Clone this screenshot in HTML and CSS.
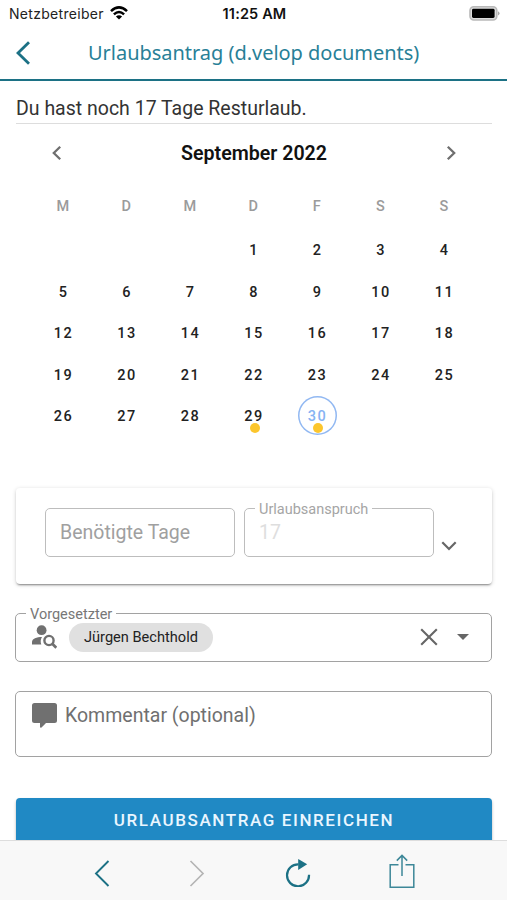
FILE: index.html
```html
<!DOCTYPE html>
<html lang="de">
<head>
<meta charset="utf-8">
<meta name="viewport" content="width=device-width, initial-scale=1">
<title>Urlaubsantrag</title>
<link rel="stylesheet" href="styles.css">
</head>
<body>
<div class="app">
  <div class="status">
    <div class="carrier"><span>Netzbetreiber</span>
      <svg width="18" height="14" viewBox="0 0 18 14" fill="none" stroke="#000" stroke-width="2.5"><path d="M1 5.1Q9-2.4 17 5.1"/><path d="M3.9 8.3Q9 3.6 14.1 8.3"/><path d="M9 13.6 5.9 10.5Q9 7.9 12.1 10.5Z" fill="#000" stroke="none"/></svg>
    </div>
    <div class="clock">11:25 AM</div>
    <svg class="battery" width="32" height="15" viewBox="0 0 32 15"><rect x="2" y=".8" width="26.8" height="13.2" rx="3.8" fill="#ddd" stroke="#b9b9b9" stroke-width="1.6"/><rect x="4" y="2.8" width="22.6" height="9.2" rx="1.4"/><path d="M30 5.2Q33.2 7.4 30 9.6Z" fill="#aaa"/></svg>
  </div>
  <header class="header">
    <svg class="back" width="16" height="24" viewBox="0 0 16 24"><path d="M14 1.2 3 12l11 10.8" fill="none" stroke="#1c7185" stroke-width="2.8"/></svg>
    <h1>Urlaubsantrag (d.velop documents)</h1>
  </header>
  <main class="content">
    <p class="message">Du hast noch 17 Tage Resturlaub.</p>
    <section class="calendar">
      <div class="month">
        <svg width="12" height="16" viewBox="0 0 12 16"><path d="M9.2 1.7 2.8 8l6.4 6.3" fill="none" stroke="#6f6f6f" stroke-width="2.3"/></svg>
        <h2>September 2022</h2>
        <svg width="12" height="16" viewBox="0 0 12 16"><path d="M2.8 1.7 9.2 8l-6.4 6.3" fill="none" stroke="#6f6f6f" stroke-width="2.3"/></svg>
      </div>
      <div class="weekdays"><span>M</span><span>D</span><span>M</span><span>D</span><span>F</span><span>S</span><span>S</span></div>
      <div class="days">
        <span class="first">1</span><span>2</span><span>3</span><span>4</span>
        <span>5</span><span>6</span><span>7</span><span>8</span><span>9</span><span>10</span><span>11</span>
        <span>12</span><span>13</span><span>14</span><span>15</span><span>16</span><span>17</span><span>18</span>
        <span>19</span><span>20</span><span>21</span><span>22</span><span>23</span><span>24</span><span>25</span>
        <span>26</span><span>27</span><span>28</span><span class="marked">29</span><span class="marked today">30</span>
      </div>
    </section>
    <section class="card">
      <div class="field needed">Benötigte Tage</div>
      <fieldset class="field claim"><legend>Urlaubsanspruch</legend><span>17</span></fieldset>
      <svg class="expand" width="16" height="10" viewBox="0 0 16 10"><path d="M1.3 1.3 8 8l6.7-6.7" fill="none" stroke="#666" stroke-width="2.2"/></svg>
    </section>
    <fieldset class="field manager">
      <legend>Vorgesetzter</legend>
      <div class="manager-row">
        <svg width="25" height="24" viewBox="0 0 25 24"><circle cx="9.6" cy="5.2" r="4.9" fill="#707070"/><path d="M0 19.5v-2.4C0 13.7 4.7 12 10 12q-2.200 3.400-.700 7.500Z" fill="#707070"/><circle cx="17" cy="15.500" r="4.600" fill="none" stroke="#707070" stroke-width="2.400"/><path d="m20 18.500 4.300 4.300" stroke="#707070" stroke-width="2.700"/></svg>
        <span class="chip">Jürgen Bechthold</span>
        <svg class="clear" width="18" height="18" viewBox="0 0 18 18"><path d="m1.200 1.200 15.600 15.600M16.800 1.200 1.200 16.800" stroke="#666" stroke-width="2.100"/></svg>
        <svg width="12" height="6" viewBox="0 0 12 6"><path d="M0 0h12L6 6Z" fill="#666"/></svg>
      </div>
    </fieldset>
    <div class="field comment">
      <svg width="25" height="25" viewBox="0 0 25 25"><path d="M2.500 0h20A2.500 2.500 0 0 1 25 2.500v15a2.500 2.500 0 0 1-2.500 2.500H14l-4.500 4.500q-1.500.500-1.500-.800V20H2.500A2.500 2.500 0 0 1 0 17.500v-15A2.500 2.500 0 0 1 2.500 0Z" fill="#707070"/></svg>
      <span>Kommentar (optional)</span>
    </div>
    <button class="submit">URLAUBSANTRAG EINREICHEN</button>
  </main>
  <nav class="toolbar">
    <svg width="16" height="27" viewBox="0 0 16 27"><path d="M14.500 1 2 13.500 14.500 26" fill="none" stroke="#1c7185" stroke-width="1.900"/></svg>
    <svg width="16" height="27" viewBox="0 0 16 27"><path d="M1.500 1 14 13.500 1.500 26" fill="none" stroke="#b5b5b5" stroke-width="1.700"/></svg>
    <svg width="26" height="28" viewBox="0 0 26 28"><path d="M13.500 5.300A11 11 0 1 0 24 15.700" fill="none" stroke="#1c7185" stroke-width="2.200"/><path d="M13.200 0v11l9-5.700Z" fill="#1c7185"/></svg>
    <svg width="26" height="35" viewBox="0 0 26 35"><path d="M9.500 10.700H1.200v22.600h23.600V10.700h-8.300M13 22V1.500M7.800 6.600 13 1.400l5.200 5.200" fill="none" stroke="#3d8798" stroke-width="1.500"/></svg>
  </nav>
</div>
</body>
</html>
```
FILE: styles.css
```css
* { box-sizing: border-box; }
body { margin: 0; background: #fff; font-family: Roboto, sans-serif; color: #222; }
svg { display: block; flex: none; }
.app { display: flex; flex-direction: column; height: 900px; overflow: hidden; }

.status { display: grid; grid-template-columns: 1fr auto 1fr; align-items: center; height: 27px; padding: 0 7px 0 9px; font-family: Inter, sans-serif; color: #222; }
.carrier { display: flex; align-items: center; gap: 6px; margin-top: -1px; font-size: 14px; letter-spacing: .3px; }
.clock { font-size: 14.500px; font-weight: 600; letter-spacing: .15px; color: #111; }
.battery { justify-self: end; margin-top: -1px; }

.header { display: flex; align-items: center; height: 54px; padding: 0 16px 0 15px; border-bottom: 2px solid #1c7185; }
.header h1 { flex: 1; margin: 0 0 0 57px; font: 400 20px/28px "Noto Sans", sans-serif; letter-spacing: -.03px; color: #287f97; white-space: nowrap; }

.content { flex: 1; min-height: 0; overflow: hidden; padding: 0 15px; }
.message { height: 43px; margin: 0 0 0 1px; padding-top: 16px; border-bottom: 1px solid #ddd; font-size: 19.500px; line-height: 24px; color: #333; }
.month { display: flex; align-items: center; justify-content: space-between; height: 58px; padding: 0 35px 0 36px; }
.month h2 { margin: 0; font-size: 19.600px; font-weight: 600; color: #111; }
.weekdays, .days { display: grid; grid-template-columns: repeat(7, 63.500px); justify-content: center; margin-left: 1px; text-align: center; font-size: 14.500px; font-weight: 500; letter-spacing: 1.400px; }
.weekdays { padding-top: 2px; line-height: 46px; color: #9b9b9b; }
.days { grid-auto-rows: 41.500px; line-height: 41px; }
.first { grid-column: 4; }
.marked { position: relative; }
.marked::after { content: ""; position: absolute; left: 27.500px; top: 27px; width: 10px; height: 10px; border-radius: 50%; background: #fcc62d; }
.today { color: #86b3f3; }
.today::before { content: ""; position: absolute; left: 12px; top: -.500px; width: 39px; height: 39px; border-radius: 50%; box-shadow: inset 0 0 0 1.500px #91b8f2; }

.card { display: flex; align-items: flex-end; height: 96px; margin: 50px 0 0 1px; padding: 0 35px 27px 29px; border-radius: 4px; box-shadow: 0 2px 2px -1px rgba(0,0,0,.4), 0 1px 4px rgba(0,0,0,.18); }
.field { min-width: 0; margin: 0; border: 1.500px solid #a2a2a2; border-radius: 5px; }
.field legend { position: relative; top: 1px; padding: 0 4px; font-size: 14.500px; line-height: 16px; color: #777; }
.needed { width: 190px; height: 49px; padding-left: 14px; border-color: #bdbdbd; font-size: 19.500px; line-height: 48px; color: #a0a0a0; }
.claim { width: 190px; height: 56px; margin-left: 9px; padding: 0 10px; border-color: #bdbdbd; }
.claim legend { color: #a5a5a5; }
.claim span { display: block; padding-left: 4px; font-size: 19.500px; line-height: 32px; color: #dedede; }
.expand { margin: 0 0 6px 7px; }

.manager { height: 56px; margin-top: 22px; padding: 0 22px 0 10px; }
.manager-row { display: flex; align-items: center; height: 31px; padding-left: 6px; }
.chip { height: 29px; margin-left: 12px; padding: 0 15px; border-radius: 15px; background: #e0e0e0; font-size: 14.600px; line-height: 29px; }
.clear { margin: 0 19px 0 auto; }
.comment { display: flex; height: 66px; margin-top: 29px; padding: 11px 16px; font-size: 19.500px; line-height: 25px; color: #707070; }
.comment span { margin-left: 8px; }
.submit { display: block; width: 476px; height: 48px; margin: 41px 0 0 1px; padding: 0 0 3px; border: 0; border-radius: 4px; background: #2089c4; box-shadow: 0 2px 3px rgba(0,0,0,.3); font: 500 17px Roboto, sans-serif; letter-spacing: 1.600px; color: #eaf6ff; }

.toolbar { display: flex; align-items: flex-start; height: 60px; padding: 13px 92px 0 94px; border-top: 1px solid #ddd; background: #f8f8f8; }
.toolbar svg:nth-child(1) { margin-top: 6px; }
.toolbar svg:nth-child(2) { margin: 6px 0 0 79px; }
.toolbar svg:nth-child(3) { margin: 5px 0 0 80px; }
.toolbar svg:nth-child(4) { margin-left: 78px; }
```
